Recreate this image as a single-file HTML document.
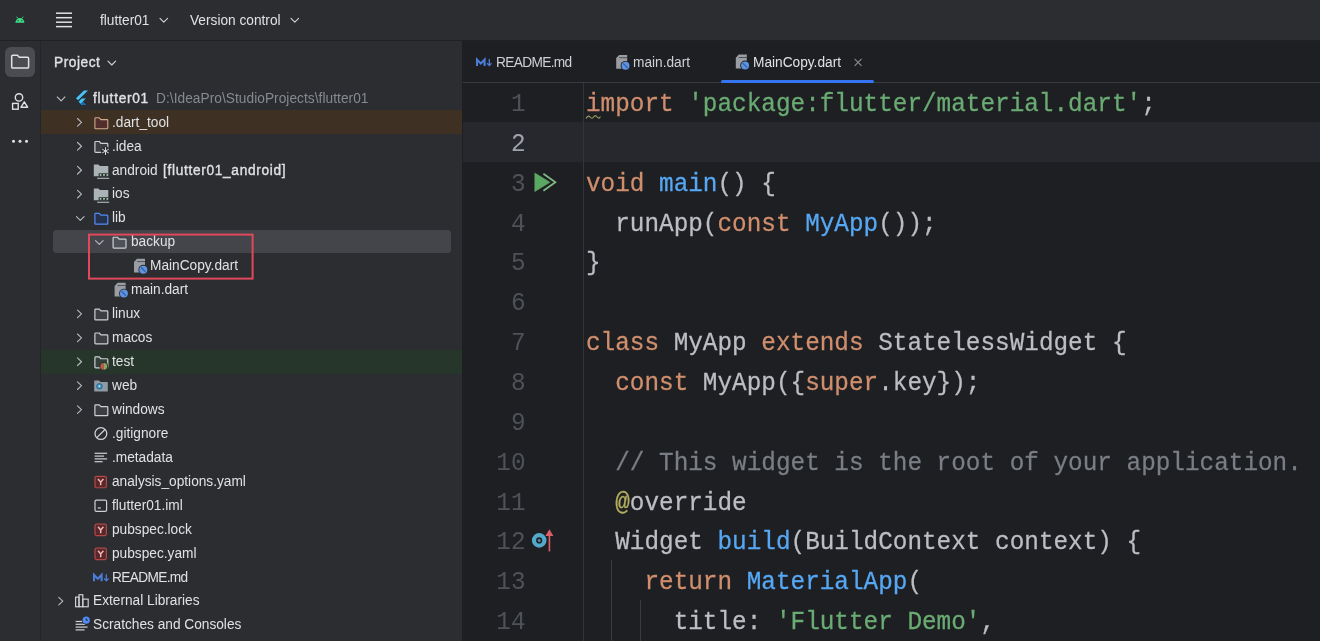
<!DOCTYPE html>
<html><head><meta charset="utf-8">
<style>
*{margin:0;padding:0;box-sizing:border-box}
html,body{width:1320px;height:641px;overflow:hidden;background:#2b2d30;font-family:"Liberation Sans",sans-serif;color:#dfe1e5}
.t,.code,.ln{will-change:transform}
.a{position:absolute}
.t{font-size:13.7px;white-space:pre;line-height:16px;transform:scaleY(1.05);transform-origin:0 12.75px}
.sb{font-weight:400;-webkit-text-stroke:0.35px #dfe1e5;letter-spacing:0.55px}
.t b{font-weight:700}
.row{position:absolute;left:41px;width:421px;height:24px}
.code{position:absolute;left:586.4px;font-family:"Liberation Mono",monospace;font-size:24.35px;white-space:pre;color:#bcbec4;line-height:40px;height:40px;transform:scaleY(1.04);transform-origin:0 26.5px;-webkit-text-stroke:0.25px currentColor}
.ln{position:absolute;font-family:"Liberation Mono",monospace;font-size:24.35px;color:#4e5258;line-height:40px;text-align:right;left:463px;width:62.5px;transform:scaleY(1.09);transform-origin:0 29px}
.k{color:#cf8e6d}.s{color:#6aab73}.f{color:#56a8f5}.c{color:#7a7e85}.an{color:#b3ae60}
</style></head><body>
<div class="a" style="left:0;top:0;width:1320px;height:40px;background:#2b2d30"></div>
<div class="a" style="left:0;top:40px;width:1320px;height:1px;background:#202125"></div>
<div class="a" style="left:40px;top:41px;width:1px;height:600px;background:#242529"></div>
<div class="a" style="left:462px;top:41px;width:1px;height:600px;background:#1e1f22"></div>
<div class="a" style="left:463px;top:41px;width:857px;height:600px;background:#1e1f22"></div>
<div class="a" style="left:463px;top:82px;width:857px;height:1px;background:#393b40"></div>

<div class="a t" style="left:100px;top:13.2px">flutter01</div>
<div class="a t" style="left:189.5px;top:13.2px">Version control</div>
<div class="a t sb" style="left:53.5px;top:54.7px">Project</div>

<div class="row" style="top:110.34px;background:#3e3123"></div>
<div class="row" style="top:349.74px;background:#26362a"></div>
<div class="a" style="left:53px;top:229.8px;width:398px;height:23.4px;background:#43454a;border-radius:3.5px"></div>
<div class="a t" style="left:93px;top:90.70px;"><span class="sb" style="letter-spacing:0.72px">flutter01</span></div>
<div class="a t" style="left:155.5px;top:90.70px;color:#868a91;letter-spacing:0.05px">D:\IdeaPro\StudioProjects\flutter01</div>
<div class="a t" style="left:112.3px;top:114.64px;">.dart_tool</div>
<div class="a t" style="left:111.5px;top:138.58px;">.idea</div>
<div class="a t" style="left:111.5px;top:162.52px;">android</div>
<div class="a t" style="left:163px;top:162.52px;"><span class="sb" style="letter-spacing:0.68px">[flutter01_android]</span></div>
<div class="a t" style="left:111.5px;top:186.46px;">ios</div>
<div class="a t" style="left:111.5px;top:210.40px;">lib</div>
<div class="a t" style="left:131px;top:234.34px;">backup</div>
<div class="a t" style="left:149.5px;top:258.28px;">MainCopy.dart</div>
<div class="a t" style="left:131px;top:282.22px;">main.dart</div>
<div class="a t" style="left:111.5px;top:306.16px;">linux</div>
<div class="a t" style="left:111.5px;top:330.10px;">macos</div>
<div class="a t" style="left:111.5px;top:354.04px;">test</div>
<div class="a t" style="left:111.5px;top:377.98px;">web</div>
<div class="a t" style="left:111.5px;top:401.92px;">windows</div>
<div class="a t" style="left:111.5px;top:425.86px;">.gitignore</div>
<div class="a t" style="left:111.5px;top:449.80px;">.metadata</div>
<div class="a t" style="left:111.5px;top:473.74px;">analysis_options.yaml</div>
<div class="a t" style="left:111.5px;top:497.68px;">flutter01.iml</div>
<div class="a t" style="left:111.5px;top:521.62px;">pubspec.lock</div>
<div class="a t" style="left:111.5px;top:545.56px;">pubspec.yaml</div>
<div class="a t" style="left:111.5px;top:569.50px;letter-spacing:-0.65px">README.md</div>
<div class="a t" style="left:93px;top:593.44px;">External Libraries</div>
<div class="a t" style="left:93px;top:617.38px;">Scratches and Consoles</div>

<div class="a t" style="left:496.4px;top:55px;letter-spacing:-0.65px;color:#cdd0d5">README.md</div>
<div class="a t" style="left:633px;top:55px;color:#cdd0d5">main.dart</div>
<div class="a t" style="left:753px;top:55px">MainCopy.dart</div>
<div class="a" style="left:721px;top:79.5px;width:153px;height:3.5px;background:#3574f0;border-radius:2px"></div>

<div class="a" style="left:463px;top:121.85px;width:857px;height:39.85px;background:#26282e"></div>
<div class="a" style="left:583px;top:83px;width:1px;height:558px;background:#313438"></div>
<div class="ln" style="top:85.00px;">1</div>
<div class="ln" style="top:124.85px;color:#a1a3ab">2</div>
<div class="ln" style="top:164.70px;">3</div>
<div class="ln" style="top:204.55px;">4</div>
<div class="ln" style="top:244.40px;">5</div>
<div class="ln" style="top:284.25px;">6</div>
<div class="ln" style="top:324.10px;">7</div>
<div class="ln" style="top:363.95px;">8</div>
<div class="ln" style="top:403.80px;">9</div>
<div class="ln" style="top:443.65px;">10</div>
<div class="ln" style="top:483.50px;">11</div>
<div class="ln" style="top:523.35px;">12</div>
<div class="ln" style="top:563.20px;">13</div>
<div class="ln" style="top:603.05px;">14</div>
<div class="code" style="top:85.00px"><span class="k">import</span> <span class="s">'package:flutter/material.dart'</span>;</div>
<div class="code" style="top:164.70px"><span class="k">void</span> <span class="f">main</span>() {</div>
<div class="code" style="top:204.55px">  runApp(<span class="k">const</span> <span class="f">MyApp</span>());</div>
<div class="code" style="top:244.40px">}</div>
<div class="code" style="top:324.10px"><span class="k">class</span> MyApp <span class="k">extends</span> StatelessWidget {</div>
<div class="code" style="top:363.95px">  <span class="k">const</span> MyApp({<span class="k">super</span>.key});</div>
<div class="code" style="top:443.65px">  <span class="c">// This widget is the root of your application.</span></div>
<div class="code" style="top:483.50px">  <span class="an">@</span>override</div>
<div class="code" style="top:523.35px">  Widget <span class="f">build</span>(BuildContext context) {</div>
<div class="code" style="top:563.20px">    <span class="k">return</span> <span class="f">MaterialApp</span>(</div>
<div class="code" style="top:603.05px">      title: <span class="s">'Flutter Demo'</span>,</div>
<svg class="a" style="left:0;top:0" width="1320" height="641" viewBox="0 0 1320 641">
<path d="M15.4,22.8 A4.5,4.7 0 0 1 24.4,22.8 Z" fill="#3ddc84"/>
<line x1="16.6" y1="16.6" x2="17.8" y2="18.4" stroke="#3ddc84" stroke-width="0.9"/><line x1="23.2" y1="16.6" x2="22" y2="18.4" stroke="#3ddc84" stroke-width="0.9"/>
<circle cx="18" cy="20.6" r="0.6" fill="#2b2d30"/><circle cx="21.8" cy="20.6" r="0.6" fill="#2b2d30"/>
<rect x="56" y="12.45" width="16" height="1.5" fill="#dfe1e5"/>
<rect x="56" y="16.95" width="16" height="1.5" fill="#dfe1e5"/>
<rect x="56" y="21.45" width="16" height="1.5" fill="#dfe1e5"/>
<rect x="56" y="25.85" width="16" height="1.5" fill="#dfe1e5"/>
<polyline points="160,18.3 163.8,22.1 167.6,18.3" fill="none" stroke="#ced0d6" stroke-width="1.15" stroke-linecap="round" stroke-linejoin="round"/>
<polyline points="291,18.3 294.8,22.1 298.6,18.3" fill="none" stroke="#ced0d6" stroke-width="1.15" stroke-linecap="round" stroke-linejoin="round"/>
<rect x="5" y="47" width="30" height="30" rx="6" fill="#4a4c52"/>
<path d="M11.7,56.3 q0,-1.1 1.1,-1.1 h4.6 l1.9,2.1 h8.2 q1.1,0 1.1,1.1 v8.6 q0,1.1 -1.1,1.1 h-14.7 q-1.1,0 -1.1,-1.1 z" fill="none" stroke="#dfe1e5" stroke-width="1.5" stroke-linejoin="round"/>
<circle cx="19" cy="97.4" r="3.7" fill="none" stroke="#dfe1e5" stroke-width="1.4"/>
<rect x="12.6" y="103.4" width="5.6" height="5.8" fill="none" stroke="#dfe1e5" stroke-width="1.4"/>
<path d="M24.3,101.8 L27.6,107.2 H21 Z" fill="none" stroke="#dfe1e5" stroke-width="1.4" stroke-linejoin="round"/>
<circle cx="13.5" cy="141.3" r="1.5" fill="#dfe1e5"/>
<circle cx="20" cy="141.3" r="1.5" fill="#dfe1e5"/>
<circle cx="26.5" cy="141.3" r="1.5" fill="#dfe1e5"/>
<polyline points="108,61.2 111.8,65.0 115.6,61.2" fill="none" stroke="#ced0d6" stroke-width="1.15" stroke-linecap="round" stroke-linejoin="round"/>
<polyline points="57.3,97.0 61.099999999999994,100.8 64.89999999999999,97.0" fill="none" stroke="#b4b8bf" stroke-width="1.15" stroke-linecap="round" stroke-linejoin="round"/>
<path d="M76,98.2 L84,90.6 H88 L78,100.3 Z" fill="#47c5fb"/>
<path d="M81.8,98.4 H85.8 L82.6,101.7 L85.8,105.1 H81.8 L78.6,101.7 Z" fill="#47c5fb"/>
<path d="M80.5,103.6 L82.6,101.7 L85.8,105.1 H81.8 Z" fill="#0f6fbf"/>
<polyline points="77.5,118.54 81.5,122.34 77.5,126.14" fill="none" stroke="#b4b8bf" stroke-width="1.15" stroke-linecap="round" stroke-linejoin="round"/>
<path d="M94.9,118.64 q0,-0.8 0.8,-0.8 h3.6 l1.6,1.8 h6.1 q0.8,0 0.8,0.8 v7.5 q0,0.8 -0.8,0.8 h-11.3 q-0.8,0 -0.8,-0.8 z" fill="#522f2c" stroke="#d2ad8e" stroke-width="1.05" stroke-linejoin="round"/>
<polyline points="77.5,142.48 81.5,146.28 77.5,150.08" fill="none" stroke="#b4b8bf" stroke-width="1.15" stroke-linecap="round" stroke-linejoin="round"/>
<path d="M94.9,142.28 q0,-0.8 0.8,-0.8 h3.6 l1.6,1.8 h6.1 q0.8,0 0.8,0.8 v7.5 q0,0.8 -0.8,0.8 h-11.3 q-0.8,0 -0.8,-0.8 z" fill="#3c3e43" stroke="#ced0d6" stroke-width="1.2" stroke-linejoin="round"/>
<circle cx="105.5" cy="151.08" r="4.6" fill="#2b2d30"/>
<g stroke="#d6d8dc" stroke-width="1.0" stroke-linecap="round"><line x1="105.5" y1="147.58" x2="105.5" y2="154.58"/><line x1="102.5" y1="149.33" x2="108.5" y2="152.83"/><line x1="102.5" y1="152.83" x2="108.5" y2="149.33"/></g>
<polyline points="77.5,166.42000000000002 81.5,170.22000000000003 77.5,174.02000000000004" fill="none" stroke="#b4b8bf" stroke-width="1.15" stroke-linecap="round" stroke-linejoin="round"/>
<path d="M93.8,164.52000000000004 h4.6 l1.5,1.6 h8.4 v10.1 h-14.5 z" fill="#acb3b7"/>
<rect x="98.6" y="173.32000000000002" width="10.2" height="3.2" fill="#1f3328"/>
<rect x="99.7" y="174.22000000000003" width="1.7" height="1.5" fill="#d2dad5"/>
<rect x="103.1" y="174.22000000000003" width="1.7" height="1.5" fill="#d2dad5"/>
<rect x="106.5" y="174.22000000000003" width="1.7" height="1.5" fill="#d2dad5"/>
<rect x="97.2" y="177.72000000000003" width="12" height="1.3" fill="#9fa7ab"/>
<polyline points="77.5,190.36 81.5,194.16000000000003 77.5,197.96000000000004" fill="none" stroke="#b4b8bf" stroke-width="1.15" stroke-linecap="round" stroke-linejoin="round"/>
<path d="M93.8,188.46000000000004 h4.6 l1.5,1.6 h8.4 v10.1 h-14.5 z" fill="#acb3b7"/>
<rect x="98.6" y="197.26000000000002" width="10.2" height="3.2" fill="#1f3328"/>
<rect x="99.7" y="198.16000000000003" width="1.7" height="1.5" fill="#d2dad5"/>
<rect x="103.1" y="198.16000000000003" width="1.7" height="1.5" fill="#d2dad5"/>
<rect x="106.5" y="198.16000000000003" width="1.7" height="1.5" fill="#d2dad5"/>
<rect x="97.2" y="201.66000000000003" width="12" height="1.3" fill="#9fa7ab"/>
<polyline points="76.5,216.60000000000002 80.3,220.40000000000003 84.1,216.60000000000002" fill="none" stroke="#b4b8bf" stroke-width="1.15" stroke-linecap="round" stroke-linejoin="round"/>
<path d="M94.9,214.10000000000002 q0,-0.8 0.8,-0.8 h3.6 l1.6,1.8 h6.1 q0.8,0 0.8,0.8 v7.5 q0,0.8 -0.8,0.8 h-11.3 q-0.8,0 -0.8,-0.8 z" fill="#25324d" stroke="#548af7" stroke-width="1.2" stroke-linejoin="round"/>
<polyline points="95.5,240.54000000000002 99.3,244.34000000000003 103.1,240.54000000000002" fill="none" stroke="#b4b8bf" stroke-width="1.15" stroke-linecap="round" stroke-linejoin="round"/>
<path d="M113.10000000000001,238.04000000000002 q0,-0.8 0.8,-0.8 h3.6 l1.6,1.8 h6.1 q0.8,0 0.8,0.8 v7.5 q0,0.8 -0.8,0.8 h-11.3 q-0.8,0 -0.8,-0.8 z" fill="#50525a" stroke="#ced0d6" stroke-width="1.2" stroke-linejoin="round"/>
<path d="M134,261.98 L137,258.78000000000003 H145 V272.58000000000004 H134 Z" fill="#9a9ea4"/><rect x="137" y="261.18" width="8" height="0.9" fill="#2b2d30" opacity="0.7"/><circle cx="143.3" cy="269.68" r="4.9" fill="#2b2d30"/><circle cx="143.3" cy="269.68" r="4" fill="#5f93de"/><line x1="141" y1="267.28000000000003" x2="145.4" y2="271.88000000000005" stroke="#2f5fae" stroke-width="1.2"/>
<path d="M114.6,285.92 L117.6,282.72 H125.6 V296.52000000000004 H114.6 Z" fill="#9a9ea4"/><rect x="117.6" y="285.12" width="8" height="0.9" fill="#2b2d30" opacity="0.7"/><circle cx="123.89999999999999" cy="293.62" r="4.9" fill="#2b2d30"/><circle cx="123.89999999999999" cy="293.62" r="4" fill="#5f93de"/><line x1="121.6" y1="291.22" x2="126.0" y2="295.82000000000005" stroke="#2f5fae" stroke-width="1.2"/>
<polyline points="77.5,310.06 81.5,313.86 77.5,317.66" fill="none" stroke="#b4b8bf" stroke-width="1.15" stroke-linecap="round" stroke-linejoin="round"/>
<path d="M94.9,309.86 q0,-0.8 0.8,-0.8 h3.6 l1.6,1.8 h6.1 q0.8,0 0.8,0.8 v7.5 q0,0.8 -0.8,0.8 h-11.3 q-0.8,0 -0.8,-0.8 z" fill="#3c3e43" stroke="#ced0d6" stroke-width="1.2" stroke-linejoin="round"/>
<polyline points="77.5,334.0 81.5,337.8 77.5,341.6" fill="none" stroke="#b4b8bf" stroke-width="1.15" stroke-linecap="round" stroke-linejoin="round"/>
<path d="M94.9,333.8 q0,-0.8 0.8,-0.8 h3.6 l1.6,1.8 h6.1 q0.8,0 0.8,0.8 v7.5 q0,0.8 -0.8,0.8 h-11.3 q-0.8,0 -0.8,-0.8 z" fill="#3c3e43" stroke="#ced0d6" stroke-width="1.2" stroke-linejoin="round"/>
<polyline points="77.5,405.82 81.5,409.62 77.5,413.42" fill="none" stroke="#b4b8bf" stroke-width="1.15" stroke-linecap="round" stroke-linejoin="round"/>
<path d="M94.9,405.62 q0,-0.8 0.8,-0.8 h3.6 l1.6,1.8 h6.1 q0.8,0 0.8,0.8 v7.5 q0,0.8 -0.8,0.8 h-11.3 q-0.8,0 -0.8,-0.8 z" fill="#3c3e43" stroke="#ced0d6" stroke-width="1.2" stroke-linejoin="round"/>
<polyline points="77.5,357.94 81.5,361.74 77.5,365.54" fill="none" stroke="#b4b8bf" stroke-width="1.15" stroke-linecap="round" stroke-linejoin="round"/>
<path d="M94.9,357.74 q0,-0.8 0.8,-0.8 h3.6 l1.6,1.8 h6.1 q0.8,0 0.8,0.8 v7.5 q0,0.8 -0.8,0.8 h-11.3 q-0.8,0 -0.8,-0.8 z" fill="#34413a" stroke="#ced0d6" stroke-width="1.2" stroke-linejoin="round"/>
<circle cx="103.8" cy="366.34000000000003" r="4.4" fill="#26362a"/><path d="M103.8,362.94 A3.4,3.4 0 0 0 103.8,369.74 Z" fill="#c95450"/><path d="M103.8,362.94 A3.4,3.4 0 0 1 103.8,369.74 Z" fill="#8aa860"/>
<polyline points="77.5,381.88000000000005 81.5,385.68000000000006 77.5,389.4800000000001" fill="none" stroke="#b4b8bf" stroke-width="1.15" stroke-linecap="round" stroke-linejoin="round"/>
<path d="M94.2,380.4800000000001 h4.8 l1.6,1.6 h7.2 v9.4 h-13.6 z" fill="#8d9aa6"/>
<circle cx="99.4" cy="386.2800000000001" r="2.8" fill="#3592c4" stroke="#1e4a66" stroke-width="0.6"/><circle cx="99.4" cy="386.2800000000001" r="1" fill="#cfe6f5"/>
<circle cx="100.9" cy="433.56000000000006" r="5.9" fill="none" stroke="#ced0d6" stroke-width="1.3"/><line x1="96.8" y1="437.6600000000001" x2="105" y2="429.46000000000004" stroke="#ced0d6" stroke-width="1.3"/>
<rect x="94.6" y="452.7" width="12.5" height="1.2" fill="#ced0d6"/>
<rect x="94.6" y="455.5" width="9.5" height="1.2" fill="#ced0d6"/>
<rect x="94.6" y="458.29999999999995" width="12.5" height="1.2" fill="#ced0d6"/>
<rect x="94.6" y="461.09999999999997" width="8" height="1.2" fill="#ced0d6"/>
<rect x="95.0" y="476.3400000000001" width="11.4" height="11.4" rx="1.5" fill="#5a2628" stroke="#b04a4a" stroke-width="1.2"/><path d="M98.0,478.94000000000005 L100.7,482.14000000000004 L103.4,478.94000000000005 M100.7,482.14000000000004 V485.3400000000001" fill="none" stroke="#ecb8b8" stroke-width="1.5"/>
<rect x="95.0" y="524.22" width="11.4" height="11.4" rx="1.5" fill="#5a2628" stroke="#b04a4a" stroke-width="1.2"/><path d="M98.0,526.82 L100.7,530.02 L103.4,526.82 M100.7,530.02 V533.22" fill="none" stroke="#ecb8b8" stroke-width="1.5"/>
<rect x="95.0" y="548.16" width="11.4" height="11.4" rx="1.5" fill="#5a2628" stroke="#b04a4a" stroke-width="1.2"/><path d="M98.0,550.76 L100.7,553.9599999999999 L103.4,550.76 M100.7,553.9599999999999 V557.16" fill="none" stroke="#ecb8b8" stroke-width="1.5"/>
<rect x="95" y="500.08" width="11.6" height="11.2" rx="1.4" fill="none" stroke="#ced0d6" stroke-width="1.2"/><rect x="97.8" y="507.38" width="3" height="1.2" fill="#ced0d6"/>
<path d="M94,581.3000000000001 V574.9000000000001 L97.8,578.7 L101.6,574.9000000000001 V581.3000000000001" fill="none" stroke="#4b7dd8" stroke-width="2.1" stroke-linejoin="miter"/><path d="M106.3,574.2 V580.7 M104.1,578.5000000000001 L106.3,580.9000000000001 L108.5,578.5000000000001" fill="none" stroke="#4b7dd8" stroke-width="1.3"/>
<polyline points="58.8,597.34 62.8,601.14 58.8,604.9399999999999" fill="none" stroke="#b4b8bf" stroke-width="1.15" stroke-linecap="round" stroke-linejoin="round"/>
<g fill="none" stroke="#ced0d6" stroke-width="1.2"><rect x="75.6" y="597.14" width="3.4" height="9.6"/><rect x="79" y="594.74" width="3.8" height="12"/><rect x="82.8" y="599.14" width="5.4" height="7.6"/></g>
<rect x="75.6" y="620.88" width="7" height="1.2" fill="#ced0d6"/>
<rect x="75.6" y="623.6800000000001" width="9.5" height="1.2" fill="#ced0d6"/>
<rect x="75.6" y="626.48" width="12" height="1.2" fill="#ced0d6"/>
<rect x="75.6" y="629.28" width="9" height="1.2" fill="#ced0d6"/>
<circle cx="86.2" cy="620.1800000000001" r="4.3" fill="#2b2d30"/><circle cx="86.2" cy="620.1800000000001" r="3.6" fill="#548af7"/><path d="M86.2,618.2800000000001 V620.2800000000001 H87.8" fill="none" stroke="#1e1f22" stroke-width="0.9"/>
<rect x="89" y="234.6" width="163.6" height="44" fill="none" stroke="#e1485a" stroke-width="2"/>
<path d="M477,66.0 V59.6 L480.8,63.4 L484.6,59.6 V66.0" fill="none" stroke="#4b7dd8" stroke-width="2.1" stroke-linejoin="miter"/><path d="M489.3,58.9 V65.4 M487.1,63.2 L489.3,65.6 L491.5,63.2" fill="none" stroke="#4b7dd8" stroke-width="1.3"/>
<path d="M616.2,58.1 L619.2,54.9 H627.2 V68.7 H616.2 Z" fill="#9a9ea4"/><rect x="619.2" y="57.3" width="8" height="0.9" fill="#1e1f22" opacity="0.7"/><circle cx="625.5" cy="65.8" r="4.9" fill="#1e1f22"/><circle cx="625.5" cy="65.8" r="4" fill="#5f93de"/><line x1="623.2" y1="63.4" x2="627.6" y2="68.0" stroke="#2f5fae" stroke-width="1.2"/>
<path d="M735.8,57.800000000000004 L738.8,54.6 H746.8 V68.4 H735.8 Z" fill="#9a9ea4"/><rect x="738.8" y="57.0" width="8" height="0.9" fill="#1e1f22" opacity="0.7"/><circle cx="745.0999999999999" cy="65.5" r="4.9" fill="#1e1f22"/><circle cx="745.0999999999999" cy="65.5" r="4" fill="#5f93de"/><line x1="742.8" y1="63.1" x2="747.1999999999999" y2="67.7" stroke="#2f5fae" stroke-width="1.2"/>
<path d="M854.6,58.8 L861.6,65.8 M861.6,58.8 L854.6,65.8" stroke="#8c8f94" stroke-width="1.05"/>
<path d="M534.8,173 V191.6 L550,182.3 Z" fill="#5aa863" stroke="#5aa863" stroke-width="0.6" stroke-linejoin="round"/>
<polyline points="543.4,173.8 555.4,182.3 543.4,190.8" fill="none" stroke="#80bb85" stroke-width="1.7" stroke-linejoin="miter"/>
<circle cx="539.2" cy="540.4" r="5.2" fill="none" stroke="#52a9cc" stroke-width="4.2"/><circle cx="539.2" cy="540.5" r="1.5" fill="#4f8fa8"/>
<line x1="549.4" y1="551.4" x2="549.4" y2="532" stroke="#dc5f68" stroke-width="1.6"/><path d="M545.4,536 L549.4,529.2 L553.4,536 Z" fill="#dc5f68"/>
<path d="M586,118.6 Q588,114.6 590,117 T593.6,117 T597.2,117 T600.4,116.6" fill="none" stroke="#a6a46a" stroke-width="1.1"/>
<line x1="611.5" y1="560" x2="611.5" y2="641" stroke="#393b40" stroke-width="1"/>
<line x1="640.5" y1="600" x2="640.5" y2="641" stroke="#393b40" stroke-width="1"/>
</svg>
</body></html>
